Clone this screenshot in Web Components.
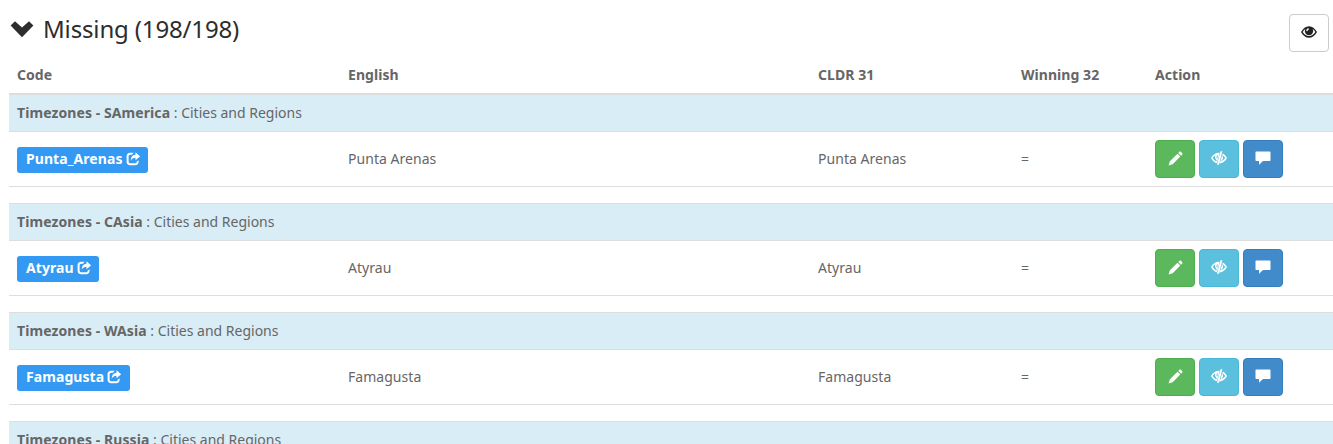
<!DOCTYPE html>
<html lang="en">
<head>
<meta charset="utf-8">
<title>Missing</title>
<style>
html,body{margin:0;height:444px;overflow:hidden;background:#fff}
body{font:14px/20px "Noto Sans","Open Sans",sans-serif;color:#666}
</style>
</head>
<body>
<missing-view></missing-view>
<script>
const ICONS = {
  down: ['0 0 24 17', '<path d="M.6 4.600 5 .3 12 6.600 19 .3l4.400 4.300L12 16.200z"/>'],
  eye: ['0 0 16 12', '<path fill-rule="evenodd" d="M0 6C2 2.500 4.800 .2 8 .2S14 2.500 16 6C14 9.500 11.200 11.800 8 11.800S2 9.500 0 6zM1.700 6C3.400 8.800 5.400 10.100 8 10.100S12.600 8.800 14.300 6C13.500 4.700 12.700 3.700 11.700 3A4.200 4.200 0 1 1 4.300 3C3.300 3.700 2.500 4.700 1.700 6zM7.400 2.200C6 2.400 5.200 3.500 5.300 4.900L6.500 5.200C6.600 4.200 7.200 3.600 8.300 3.300z"/>'],
  share: ['0 0 14 14', '<path d="M7.400 .8H4C1.800 .8 .4 2.200 .4 4.300v5.400C.4 11.800 1.800 13.200 4 13.200h5c2.100 0 3.400-1.400 3.400-3.500V8.300l-2 1.500c0 1-.5 1.500-1.500 1.500H4.200c-1.100 0-1.800-.7-1.800-1.800V4.500c0-1.100.7-1.800 1.800-1.800h1.600z"/><path d="M9.300.3 14 4.300 9.300 8.300V5.800C7.200 5.800 5.700 6.700 4.600 8.700 4.600 5.200 6.200 2.900 9.300 2.800z"/>'],
  pencil: ['0 0 16 16', '<path d="M.6 15.400 2 11 10.100 2.900l3 3L5 14zM10.900 2.100 12 1c.6-.6 1.400-.6 2 0l1 1c.6.6.6 1.400 0 2l-1.100 1.100z"/>'],
  hidden: ['0 0 16 14', '<path fill-rule="evenodd" d="M8.700 1.700 7.500 6.500 5.800 12.300C3.300 11.500 1.300 9.700 0 7 2 3.300 5 1.300 8.700 1.700zM4.200 4.200C3.100 4.900 2.300 5.900 1.700 7c1 1.600 2.100 2.700 3.600 3.400l.4-1.200C4.200 8.200 3.700 6 4.200 4.200zM6.200 4.300C5.300 5.500 5.300 6.800 6.100 7.700L6.500 6.700C6.400 6 6.600 5.200 7.100 4.600z"/><path d="M9.500.2h1.900L7.900 13.800H6zM11.800 2.400C13.600 3.400 15 5 16 7c-1.700 3.300-4.200 5.200-7.500 5.500l.5-2c2.200-.5 3.800-1.600 5.200-3.500-.8-1.200-1.700-2.200-2.900-2.900z"/><path d="M11.100 4.300C12.900 6.500 12.200 9 9.400 10.300z"/>'],
  comment: ['0 0 16 14', '<path d="M1.200 .5h13.600q.7 0 .7.700v8q0 .7-.7.700H8L4 13.700V9.900H1.200q-.7 0-.7-.7v-8q0-.7.700-.7z"/>']
};
class GlyphIcon extends HTMLElement {
  connectedCallback() {
    const [box, paths] = ICONS[this.getAttribute('name')];
    this.attachShadow({mode:'open'}).innerHTML = `<style>:host{display:inline-block;width:14px;height:14px}svg{display:block;width:100%;height:100%;fill:currentColor}</style><svg viewBox="${box}" aria-hidden="true">${paths}</svg>`;
  }
}
class ActionButton extends HTMLElement {
  connectedCallback() {
    this.attachShadow({mode:'open'}).innerHTML = `<style>
      :host{display:block;box-sizing:border-box;width:40px;height:38px;color:#fff}
      button{box-sizing:border-box;width:100%;height:100%;display:flex;align-items:center;justify-content:center;padding:0 0 2px;margin:0;border:1px solid;border-radius:4px;color:inherit;font:inherit}
      .edit{background:#5cb85c;border-color:#4cae4c}.hide{background:#5bc0de;border-color:#46b8da}
      .talk{background:#428bca;border-color:#357ebd}.view{background:#fff;border-color:#ccc;color:#222}
      .view glyph-icon{width:16px;height:12px}.edit glyph-icon{width:15px;height:15px}.hide glyph-icon{width:16px}.talk glyph-icon{width:16px;height:14px}
    </style><button class="${this.getAttribute('kind')}"><glyph-icon name="${this.getAttribute('icon')}"></glyph-icon></button>`;
  }
}
class CodeLabel extends HTMLElement {
  connectedCallback() {
    this.attachShadow({mode:'open'}).innerHTML = `<style>
      :host{display:inline-flex;align-items:center;box-sizing:border-box;height:26px;padding:0 8px 2px 9px;gap:3px;border-radius:3px;background:#3399f3;color:#fff;font-weight:700;letter-spacing:.07px;margin-top:2px}
      glyph-icon{width:14.4px;height:14px}
    </style><slot></slot><glyph-icon name="share"></glyph-icon>`;
  }
}
class ZoneGroup extends HTMLElement {
  connectedCallback() {
    const code = this.getAttribute('code'), name = code.replace('_',' ');
    this.attachShadow({mode:'open'}).innerHTML = `<style>
      :host{display:block;border-top:1px solid #ddd;margin-bottom:16px}
      .band{height:36px;line-height:36px;padding-left:8px;background:#d9edf7;border-bottom:1px solid #ddd;white-space:pre}
      .band b{letter-spacing:.08px}
      .row{display:grid;grid-template-columns:331px 470px 203px 134px 1fr;align-items:center;height:54px;padding-left:8px;border-bottom:1px solid #ddd;letter-spacing:.04px}
      .buttons{display:flex;gap:4px}
    </style><div class="band"><b>Timezones - ${this.getAttribute('zone')}</b> : Cities and Regions</div>
    ${code ? `<div class="row"><div><code-label>${code}</code-label></div><span>${name}</span><span>${name}</span><span>=</span>
      <div class="buttons"><action-button kind="edit" icon="pencil"></action-button><action-button kind="hide" icon="hidden"></action-button><action-button kind="talk" icon="comment"></action-button></div></div>` : ''}`;
  }
}
class MissingView extends HTMLElement {
  connectedCallback() {
    this.attachShadow({mode:'open'}).innerHTML = `<style>
      :host{display:block;height:444px;overflow:hidden;padding-left:9px}
      header{display:flex;align-items:flex-start;height:56px}
      h3{flex:1;display:flex;margin:0;padding:12px 0 0 1px;font-size:24px;line-height:33px;font-weight:400;color:#2d2d2d;gap:9px;letter-spacing:-.15px}
      h3 glyph-icon{width:24px;height:17px;margin-top:9px}
      header action-button{margin:14px 4px 0 0}
      .head{display:grid;grid-template-columns:331px 470px 203px 134px 1fr;padding-left:8px;height:37px;line-height:38px;font-weight:700;letter-spacing:.05px;border-bottom:1px solid #ddd}
    </style>
    <header><h3><glyph-icon name="down"></glyph-icon><span>Missing (198/198)</span></h3><action-button kind="view" icon="eye"></action-button></header>
    <div class="head"><span>Code</span><span>English</span><span>CLDR 31</span><span>Winning 32</span><span>Action</span></div>
    <zone-group zone="SAmerica" code="Punta_Arenas"></zone-group>
    <zone-group zone="CAsia" code="Atyrau"></zone-group>
    <zone-group zone="WAsia" code="Famagusta"></zone-group>
    <zone-group zone="Russia" code=""></zone-group>`;
  }
}
customElements.define('glyph-icon', GlyphIcon);
customElements.define('action-button', ActionButton);
customElements.define('code-label', CodeLabel);
customElements.define('zone-group', ZoneGroup);
customElements.define('missing-view', MissingView);
</script>
</body>
</html>
